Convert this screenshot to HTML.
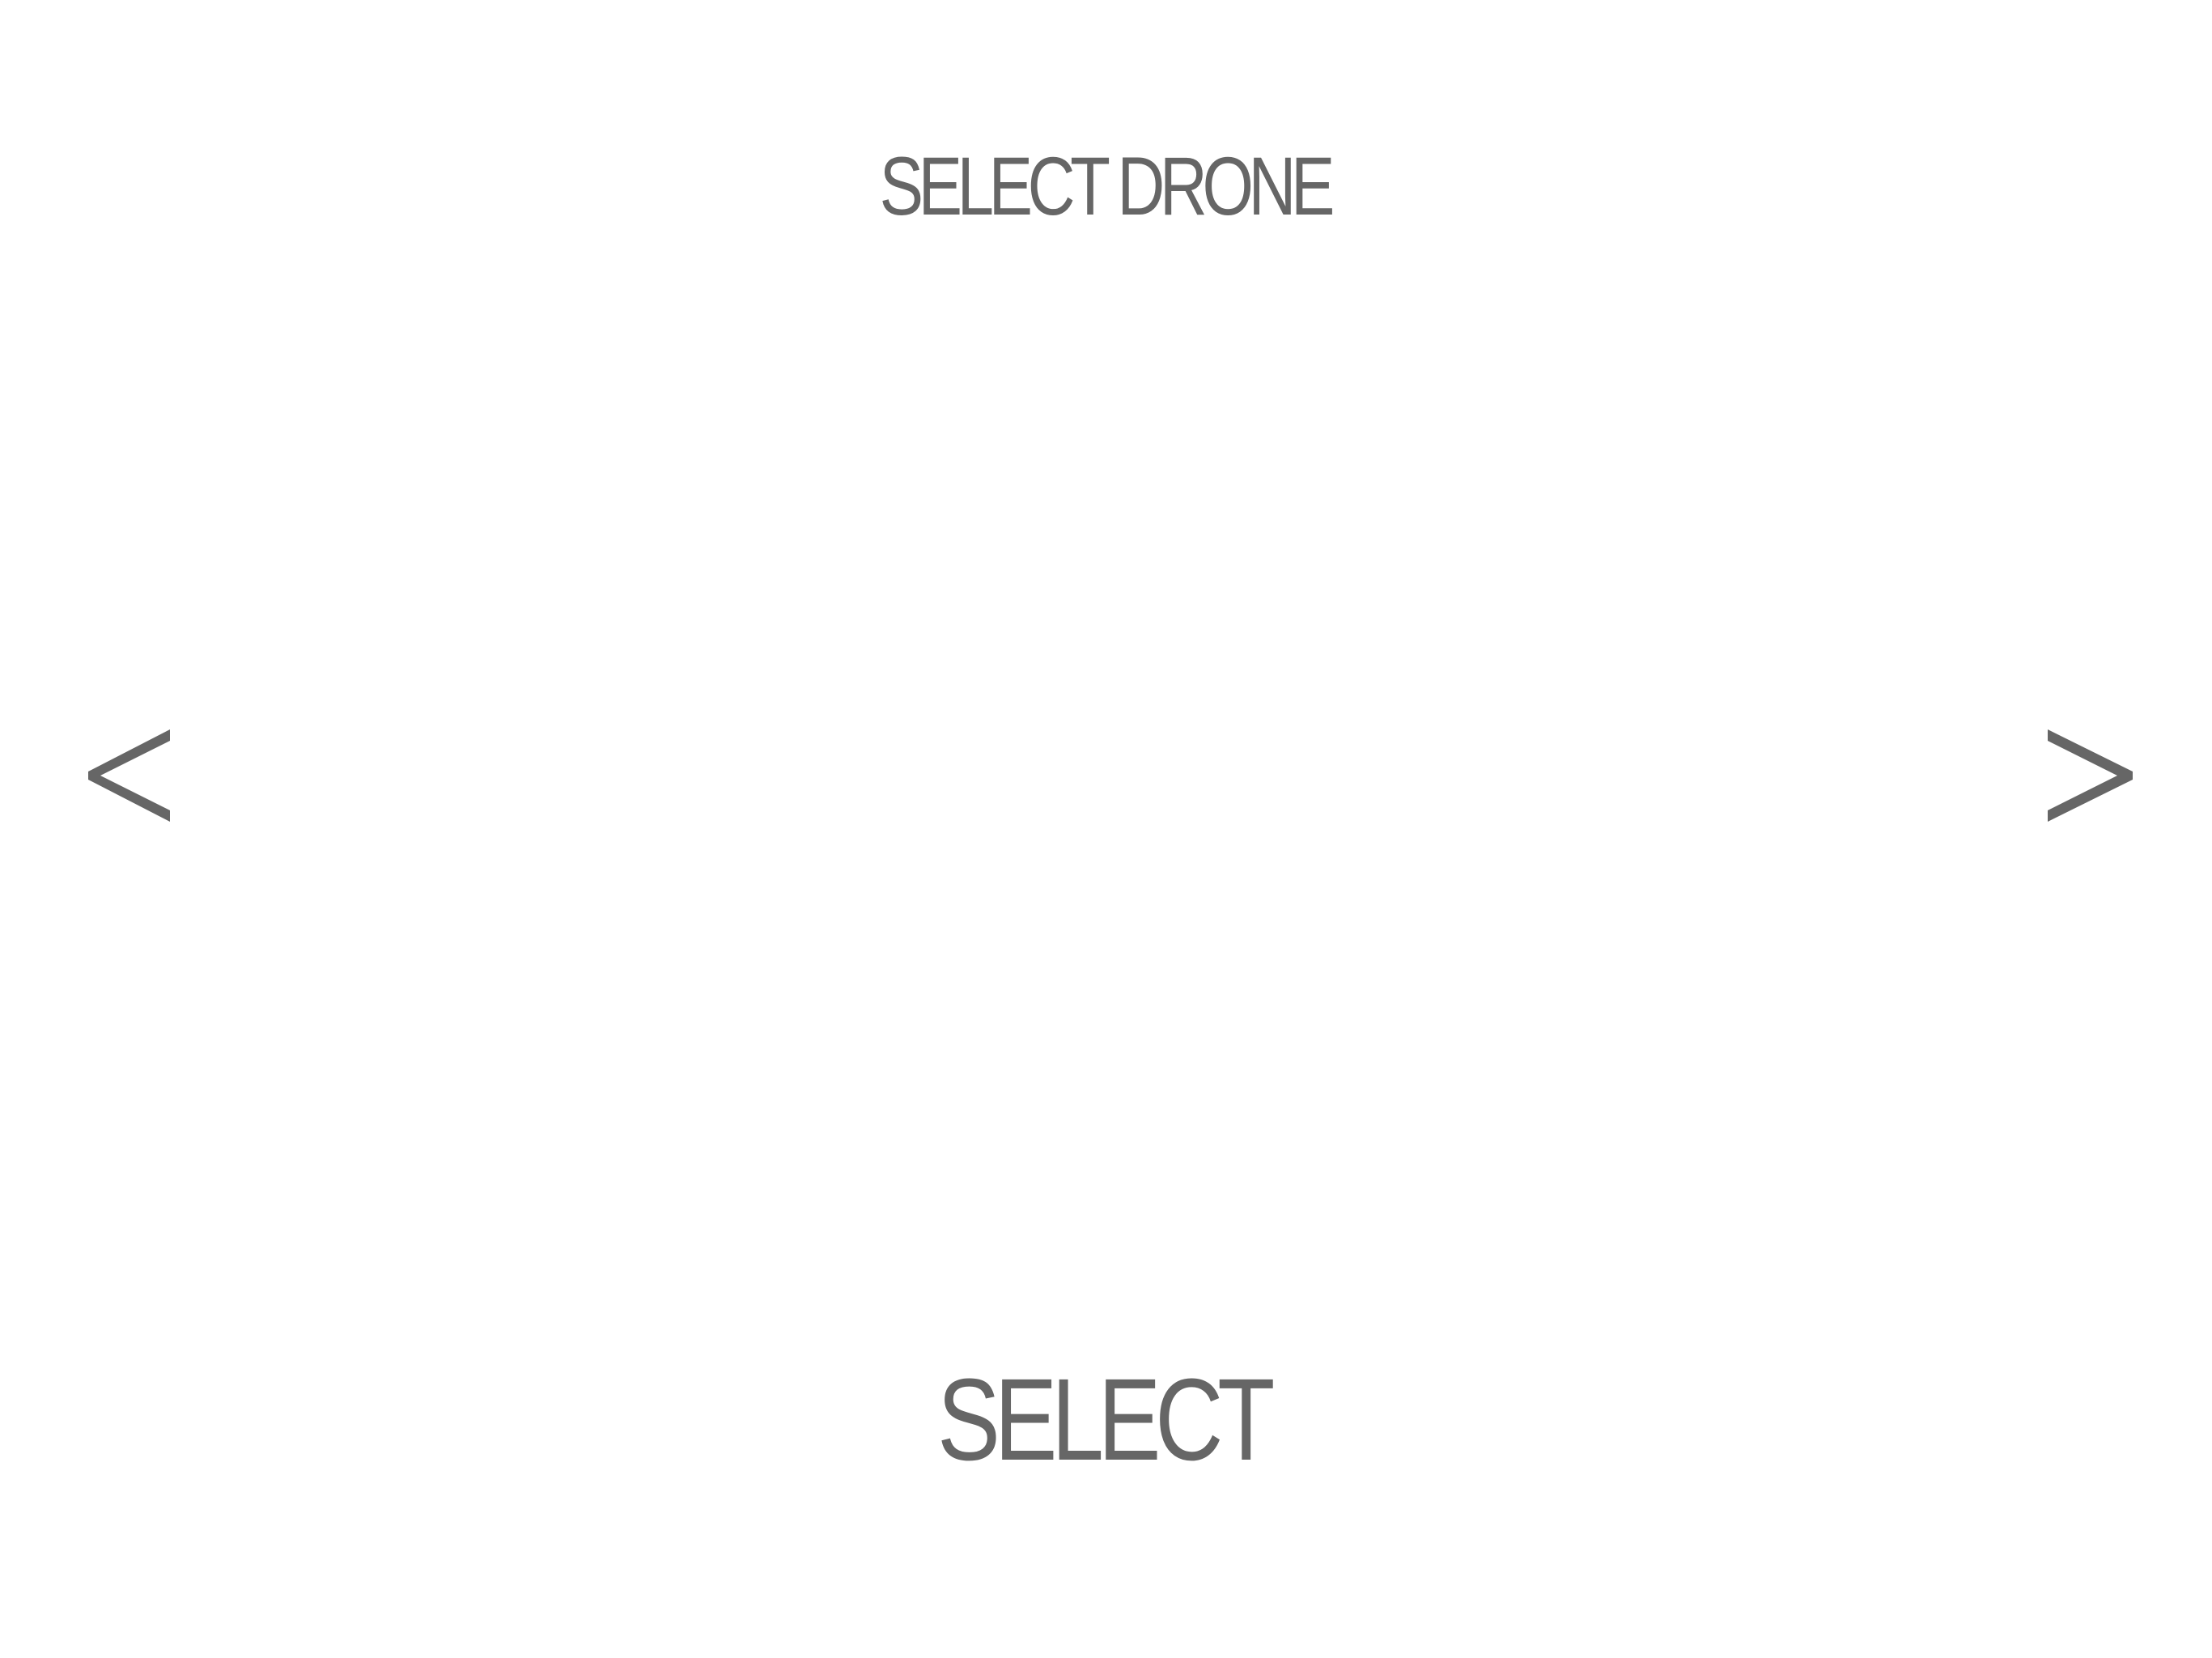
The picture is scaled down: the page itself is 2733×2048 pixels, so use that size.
<!DOCTYPE html>
<html><head><meta charset="utf-8"><style>
html,body{margin:0;padding:0;background:#fff;}
body{width:2733px;height:2048px;position:relative;overflow:hidden;font-family:"Liberation Sans",sans-serif;color:#666;}
.t{position:absolute;white-space:nowrap;line-height:1;transform-origin:center top;}
</style></head><body>
<div class="t" style="left:-6px;width:2733px;text-align:center;top:179px;font-size:102px;"><span style="display:inline-block;transform:scaleX(0.8);letter-spacing:-8px;margin-right:-8px;">SELECT DRONE</span></div>
<div class="t" style="left:-8px;width:2733px;text-align:center;top:1682px;font-size:144px;"><span style="display:inline-block;transform:scaleX(0.81);letter-spacing:-9px;margin-right:-9px;">SELECT</span></div>
<svg width="2733" height="2048" style="position:absolute;left:0;top:0">
<polygon fill="#666" points="210,901 210,915 124,958 210,1001 210,1015 109,963 109,953"/>
<polygon fill="#666" points="2530,901 2530,915 2616,958 2530,1001 2530,1015 2635,963 2635,953"/>
</svg>
</body></html>
